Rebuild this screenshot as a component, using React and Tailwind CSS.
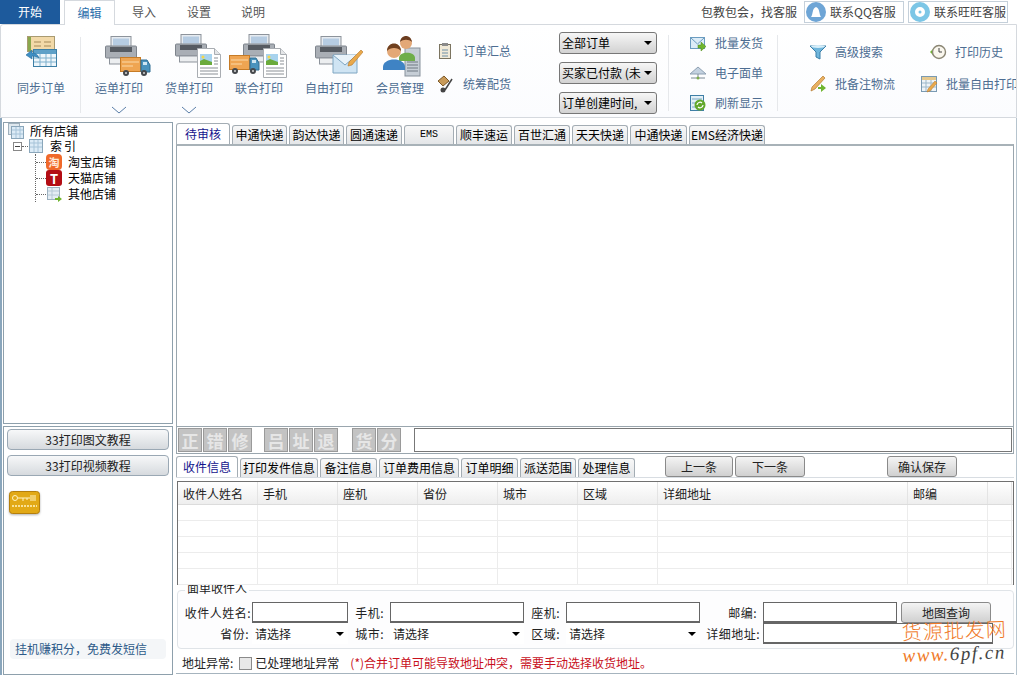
import React from 'react';

const FONT = 'font-["Noto_Sans_CJK_SC","Liberation_Sans",sans-serif]';
const COMMA = '\uFF0C';

const Printer = ({ x = 0, y = 0 }) => (
  <g transform={`translate(${x} ${y})`}>
    <rect x="6" y="0.5" width="20" height="10" fill="#e6ebf0" stroke="#8d939b" />
    <rect x="8" y="2.5" width="16" height="7" fill="#b6cce2" />
    <rect x="0.5" y="10" width="31" height="12" rx="1" fill="#a9aeb5" stroke="#7e848c" />
    <rect x="5" y="11" width="22" height="5" fill="#565b62" />
    <rect x="4.5" y="22" width="23" height="6" fill="#eceef0" stroke="#8d939b" />
  </g>
);

const Truck = ({ x = 0, y = 0 }) => (
  <g transform={`translate(${x} ${y})`}>
    <rect x="0.5" y="0.5" width="20" height="14" fill="#efa552" stroke="#c67b26" />
    <path d="M2 5h17M2 9h11" stroke="#fbd9a8" strokeWidth="1" />
    <path d="M21 3h6l3 5v7h-9z" fill="#4a93bd" stroke="#2e6d92" />
    <rect x="23" y="5" width="4" height="3" fill="#cfe6f2" />
    <circle cx="6" cy="16" r="3" fill="#45484c" />
    <circle cx="6" cy="16" r="1" fill="#d6d6d6" />
    <circle cx="24" cy="16" r="3" fill="#45484c" />
    <circle cx="24" cy="16" r="1" fill="#d6d6d6" />
  </g>
);

const Doc = ({ x = 0, y = 0 }) => (
  <g transform={`translate(${x} ${y})`}>
    <path d="M.5.5h17l6 6v23H.5z" fill="#fff" stroke="#a9adb2" />
    <path d="M17.5.5v6h6" fill="#e4e6e8" stroke="#a9adb2" />
    <rect x="3" y="6" width="12" height="11" fill="#a8d3ee" />
    <path d="M3 17v-4l4-2 8 3v3z" fill="#6bab3c" />
    <circle cx="6" cy="9" r="1.5" fill="#f6d64a" />
    <path d="M17 10h4M17 13h4M17 16h4M3 20h18M3 23h18M3 26h18" stroke="#8a8f95" />
  </g>
);

const Ico = ({ w = 18, h = 18, children }) => (
  <svg width={w} height={h} viewBox={`0 0 ${w} ${h}`} className="shrink-0">
    {children}
  </svg>
);

const SyncIcon = () => (
  <Ico w={32} h={32}>
    <rect x="2.5" y="0.5" width="27" height="15" fill="#f2d9a8" stroke="#a99a70" />
    <path d="M3 1h3v14H3z" fill="#8aa84c" />
    <path d="M9 6h7M19 6h7M9 10h7M19 10h7" stroke="#a58a58" />
    <rect x="8.5" y="13.5" width="23" height="17" fill="#eef6fb" stroke="#3d7fa6" />
    <rect x="9" y="14" width="22" height="4" fill="#5ea0c8" />
    <path d="M9 22h22M9 26h22M15 18v12M21 18v12M26 18v12" stroke="#7eb0cd" />
    <path d="M1 19l6-5v3c4 0 6 2 7 5-2-1-4-2-7-2v3z" fill="#3f8fc4" stroke="#2a6d9c" strokeWidth=".6" />
  </Ico>
);

const FreePrintIcon = () => (
  <Ico w={48} h={42}>
    <Printer x={0} y={0} />
    <path d="M18 19h24v18H18z" fill="#cfe4f3" stroke="#7ea6c2" />
    <path d="M18 19l12 10 12-10" fill="#e9f3fa" stroke="#7ea6c2" />
    <path d="M46 14l2 2-11 13-4 1 1-4z" fill="#e9a94b" stroke="#b5762a" strokeWidth=".6" />
  </Ico>
);

const MemberIcon = () => (
  <Ico w={40} h={42}>
    <rect x="22" y="12" width="15" height="28" fill="#c6ced6" stroke="#87919b" />
    <path d="M24 26h11M24 29h11M24 32h11M24 35h11" stroke="#6e7882" />
    <circle cx="23" cy="7" r="6" fill="#e3a877" />
    <path d="M17 6c1-8 11-8 12 0-3-3-9-3-12 0z" fill="#6b3d20" />
    <path d="M16 22c0-7 16-7 16 0v3H16z" fill="#6fae4a" />
    <circle cx="11" cy="15" r="7" fill="#e3a877" />
    <path d="M4 15c0-10 14-10 14 0-3-4-11-4-14 0z" fill="#70401f" />
    <path d="M0 31c0-10 22-10 22 0v3H0z" fill="#3f83c4" />
  </Ico>
);

const SummaryIcon = () => (
  <Ico>
    <rect x="3.5" y="2.5" width="11" height="14" fill="#f1ead8" stroke="#7b7460" />
    <rect x="6" y="1" width="6" height="3" fill="#8b8b8b" />
    <path d="M6 8h6M6 11h6M6 14h6" stroke="#6f8fa6" />
  </Ico>
);

const CartIcon = () => (
  <Ico>
    <path d="M2 6l6-5 5 5-6 5z" fill="#c89a58" stroke="#7d5a2a" />
    <path d="M16 4L9 15" stroke="#444" strokeWidth="1.5" />
    <circle cx="7" cy="15" r="2.5" fill="#444" />
  </Ico>
);

const MailIcon = () => (
  <Ico>
    <rect x="1.5" y="3.5" width="14" height="11" fill="#dcecf7" stroke="#6b9cc0" />
    <path d="M2 4l6.5 6L15 4" fill="none" stroke="#6b9cc0" />
    <path d="M9 11h3V8l5 4.5-5 4.5v-3H9z" fill="#6fb52f" stroke="#4c8a1a" strokeWidth=".5" />
  </Ico>
);

const CloudIcon = () => (
  <Ico>
    <path d="M1 10l8-7 8 7z" fill="#c4d2e0" stroke="#8ea0b2" />
    <path d="M9 10v4M2 14h14" stroke="#7d8a96" />
    <circle cx="9" cy="14" r="1.5" fill="#7fae4c" />
  </Ico>
);

const RefreshIcon = () => (
  <Ico>
    <rect x="1.5" y="1.5" width="13" height="15" fill="#e3f0f7" stroke="#3f7fa6" />
    <path d="M3 5h10M3 9h10M3 13h10" stroke="#7aa8c4" />
    <circle cx="11" cy="11" r="5.5" fill="#63a92c" />
    <path d="M8 11a3 3 0 015-2M14 11a3 3 0 01-5 2" fill="none" stroke="#fff" strokeWidth="1.2" />
  </Ico>
);

const FunnelIcon = () => (
  <Ico>
    <path d="M1 3h16l-6 6v7l-4-2V9z" fill="#6fb6dc" stroke="#3a7ea8" />
    <ellipse cx="9" cy="3.5" rx="7" ry="1.5" fill="#d6eef9" />
  </Ico>
);

const PencilArrowIcon = () => (
  <Ico>
    <path d="M14 1l2 2-10 11-4 2 1-4z" fill="#e9b060" stroke="#b57d34" strokeWidth=".7" />
    <path d="M9 12h3V9l5 4-5 4v-3H9z" fill="#6fb52f" />
  </Ico>
);

const ClockIcon = () => (
  <Ico>
    <path d="M1 9l3-3v6z" fill="#6fb52f" />
    <circle cx="10" cy="9" r="6.5" fill="#faf7ee" stroke="#8b8674" strokeWidth="1.4" />
    <path d="M10 5v4h3" fill="none" stroke="#444" />
  </Ico>
);

const GridPenIcon = () => (
  <Ico>
    <rect x="1.5" y="1.5" width="15" height="15" fill="#eef4f8" stroke="#7a9ab2" />
    <rect x="2" y="2" width="14" height="3" fill="#e6c98e" />
    <path d="M2 8h14M2 12h14M6 5v11M11 5v11" stroke="#9db8ca" />
    <path d="M15 6l2 2-7 8-3 1 1-3z" fill="#e9a94b" stroke="#b5762a" strokeWidth=".5" />
  </Ico>
);

const BellBadge = ({ color }) => (
  <svg width="22" height="22" viewBox="0 0 22 22" className="shrink-0">
    <circle cx="11" cy="11" r="10" fill={color} />
    <path d="M6 16c2-2 1-9 5-10 4 1 3 8 5 10z" fill="#fff" />
  </svg>
);

const RingBadge = ({ color }) => (
  <svg width="22" height="22" viewBox="0 0 22 22" className="shrink-0">
    <circle cx="11" cy="11" r="7.5" fill="#fff" stroke={color} strokeWidth="5" />
    <circle cx="11" cy="11" r="1.5" fill={color} />
  </svg>
);

const TableIcon = ({ stack }) => (
  <svg width="16" height="16" viewBox="0 0 16 16" className="shrink-0">
    {stack && <rect x="0.5" y="0.5" width="11" height="11" fill="#dfe8ee" stroke="#9fb0bc" />}
    <rect x={stack ? 3.5 : 1.5} y={stack ? 3.5 : 1.5} width={stack ? 12 : 13} height={stack ? 12 : 13} fill="#dcebf6" stroke="#8aa6ba" />
    <path d={stack ? 'M4 7h11M4 11h11M8 4v11M12 4v11' : 'M2 5h12M2 9h12M6 2v12M10 2v12'} stroke="#a6c3d8" />
  </svg>
);

const TaobaoIcon = () => (
  <span className="flex h-4 w-4 shrink-0 items-center justify-center rounded-[4px] bg-[#f0692a] text-[11px] leading-none font-bold text-[#ffe9d8]">淘</span>
);

const TmallIcon = () => (
  <span className="flex h-4 w-4 shrink-0 items-center justify-center rounded-[3px] bg-[#b30d14] text-[13px] leading-none font-bold text-white">T</span>
);

const OtherIcon = () => (
  <svg width="16" height="16" viewBox="0 0 16 16" className="shrink-0">
    <rect x="1.5" y="1.5" width="12" height="12" fill="#e4edf4" stroke="#9db1c0" />
    <path d="M2 5h11M2 9h11M6 2v11" stroke="#b5c8d6" />
    <path d="M9 12h3v-2l4 3-4 3v-2H9z" fill="#6fb52f" />
  </svg>
);

const KeyCard = () => (
  <svg width="31" height="23" viewBox="0 0 31 23">
    <rect x="0.5" y="0.5" width="30" height="22" rx="3" fill="#e2a916" stroke="#b57f0c" />
    <circle cx="6" cy="7" r="2.5" fill="none" stroke="#fff3c4" />
    <path d="M9 7h18M14 7v3M18 7v2M21 5h6M21 9h6" stroke="#fff3c4" />
    <path d="M3 15h25" stroke="#fff3c4" strokeDasharray="2 1" strokeWidth="1.5" />
  </svg>
);

const Caret = () => (
  <span className="h-0 w-0 shrink-0 border-x-[4px] border-t-[4px] border-x-transparent border-t-black" />
);

const LargeButton = ({ icon, label, chevron, width = 'w-[70px]' }) => (
  <div className={`relative flex h-full ${width} shrink-0 flex-col items-center`}>
    <div className="flex h-[46px] items-end">{icon}</div>
    <span className="mt-[2px] text-[12px] leading-[16px] whitespace-nowrap text-[#4d6d92]">{label}</span>
    {chevron && (
      <svg width="16" height="9" viewBox="0 0 16 9" className="mt-[10px]">
        <path d="M1 1l7 6 7-6" fill="none" stroke="#5a7ea8" strokeWidth="1" />
      </svg>
    )}
  </div>
);

const SmallButton = ({ icon, label, gap = 'gap-[8px]' }) => (
  <div className={`flex items-center ${gap} text-[12px] leading-[16px] whitespace-nowrap text-[#4d6d92]`}>
    {icon}
    <span>{label}</span>
  </div>
);

const RibbonSelect = ({ label }) => (
  <div className="flex h-[22px] w-[98px] items-center gap-[2px] rounded-[3px] border border-[#777] bg-gradient-to-b from-[#f6f6f6] to-[#d2d2d2] pr-[4px] pl-[2px]">
    <span className="flex-1 text-[12px] leading-[18px] whitespace-nowrap text-black">{label}</span>
    <Caret />
  </div>
);

const Divider = () => <div className="h-[76px] w-px shrink-0 self-center bg-[#e6e8eb]" />;

const Tab = ({ label, width, active, mono }) => (
  <div
    className={`flex shrink-0 items-center justify-center rounded-t-[3px] border border-b-0 border-[#a4adb4] leading-none whitespace-nowrap ${width} ${
      active ? 'bg-white text-[#14148c]' : 'mt-[2px] bg-gradient-to-b from-[#f8f8f8] to-[#e4e6e8] text-black'
    } ${mono ? 'font-["Liberation_Mono"] text-[10px]' : 'text-[12px]'}`}
  >
    {label}
  </div>
);

const GrayKey = ({ label }) => (
  <span className="flex h-[24px] w-[24px] shrink-0 items-center justify-center border border-[#9a9a9a] bg-[#c3c3c3] text-[17px] leading-none font-bold text-[#e6e6e6]">
    {label}
  </span>
);

const SideButton = ({ label }) => (
  <div className="flex h-[21px] items-center justify-center rounded-[4px] border border-[#9aa8b4] bg-gradient-to-b from-[#f7f8f9] to-[#d6dade] text-[12px] text-[#222]">
    {label}
  </div>
);

const ActionButton = ({ label, width }) => (
  <div className={`flex h-[21px] ${width} shrink-0 items-center justify-center rounded-[3px] border border-[#8a8a8a] bg-gradient-to-b from-[#f4f4f4] to-[#d0d0d0] text-[12px] text-[#222]`}>
    {label}
  </div>
);

const TreeChild = ({ icon, label }) => (
  <div className="flex h-4 items-center">
    <span className="h-0 w-[10px] shrink-0 border-t border-dotted border-[#666]" />
    {icon}
    <span className="ml-[6px]">{label}</span>
  </div>
);

const Field = ({ className = '' }) => (
  <div className={`h-[21px] border border-[#666] border-b-2 bg-white ${className}`} />
);

const FormLabel = ({ children, className = '' }) => (
  <span className={`text-right text-[12px] leading-[21px] tracking-[0.5px] whitespace-nowrap text-[#222] ${className}`}>{children}</span>
);

const FormSelect = () => (
  <div className="flex h-[21px] items-center justify-between bg-white pr-[4px] pl-[3px] text-[12px] text-[#222]">
    <span>请选择</span>
    <Caret />
  </div>
);

const COLUMNS = ['收件人姓名', '手机', '座机', '省份', '城市', '区域', '详细地址', '邮编', ''];
const TABLE_GRID = 'grid grid-cols-[80px_80px_80px_80px_80px_80px_250px_80px_24px]';

const App = () => (
  <div className={`relative flex h-[675px] w-[1017px] flex-col overflow-hidden bg-white text-[12px] text-black ${FONT}`}>
    {/* top tabs */}
    <div className="flex h-[24px] shrink-0 items-start">
      <div className="flex h-[24px] w-[60px] items-center justify-center bg-[#1d5a9c] text-white">开始</div>
      <div className="relative z-10 ml-[4px] flex h-[25px] w-[51px] items-center justify-center border border-b-0 border-[#d5d9de] bg-white text-[#2a6eaa]">编辑</div>
      <div className="ml-[2px] flex h-[24px] w-[54px] items-center justify-center text-[#555]">导入</div>
      <div className="flex h-[24px] w-[56px] items-center justify-center text-[#555]">设置</div>
      <div className="flex h-[24px] w-[52px] items-center justify-center text-[#555]">说明</div>
      <div className="ml-auto flex items-center pt-px pr-[9px]">
        <span className="mr-[7px] text-[#444]">{`包教包会${COMMA}找客服`}</span>
        <div className="flex h-[22px] w-[100px] items-center gap-[3px] border border-[#c5d0da] text-[#444]">
          <BellBadge color="#6ea5d6" />
          联系QQ客服
        </div>
        <div className="ml-[4px] flex h-[22px] w-[100px] items-center gap-[3px] border border-[#c5d0da] text-[#444]">
          <RingBadge color="#7cc6e6" />
          联系旺旺客服
        </div>
      </div>
    </div>

    {/* ribbon */}
    <div className="flex h-[94px] shrink-0 items-start overflow-hidden rounded-tl-[3px] border border-[#d5d9de] bg-gradient-to-b from-white to-[#fbfcfe] pt-[7px] pl-[5px]">
      <LargeButton label="同步订单" icon={<div className="mr-[1px] mb-[10px]"><SyncIcon /></div>} />
      <div className="mx-[4px] mt-[5px]"><Divider /></div>
      <div className="-ml-[1px] flex h-[84px] items-start">
        <LargeButton
          label="运单打印"
          chevron
          icon={
            <div className="ml-[19px]">
              <Ico w={48} h={42}>
                <Printer x={0} y={0} />
                <Truck x={15} y={21} />
              </Ico>
            </div>
          }
        />
        <LargeButton
          label="货单打印"
          chevron
          icon={
            <div className="ml-[19px]">
              <Ico w={48} h={44}>
                <Printer x={0} y={0} />
                <Doc x={22} y={14} />
              </Ico>
            </div>
          }
        />
        <LargeButton
          label="联合打印"
          icon={
            <Ico w={60} h={44}>
              <Printer x={14} y={0} />
              <Truck x={0} y={21} />
              <Doc x={34} y={14} />
            </Ico>
          }
        />
        <LargeButton label="自由打印" icon={<div className="ml-[19px]"><FreePrintIcon /></div>} />
        <LargeButton label="会员管理" width="w-[72px]" icon={<div className="ml-[5px]"><MemberIcon /></div>} />
      </div>
      <div className="flex flex-col gap-[15px] pt-[10px]">
        <SmallButton icon={<SummaryIcon />} label="订单汇总" gap="gap-[9px]" />
        <SmallButton icon={<CartIcon />} label="统筹配货" gap="gap-[9px]" />
      </div>
      <div className="mr-[9px] ml-[48px] flex flex-col gap-[8px]">
        <RibbonSelect label="全部订单" />
        <RibbonSelect label="买家已付款 (未" />
        <RibbonSelect label="订单创建时间," />
      </div>
      <div className="mt-[3px] mr-[20px] ml-[2px]"><Divider /></div>
      <div className="flex flex-col gap-[12px] pt-[2px]">
        <SmallButton icon={<MailIcon />} label="批量发货" />
        <SmallButton icon={<CloudIcon />} label="电子面单" />
        <SmallButton icon={<RefreshIcon />} label="刷新显示" />
      </div>
      <div className="mt-[3px] mr-[31px] ml-[14px]"><Divider /></div>
      <div className="flex flex-col gap-[14px] pt-[11px]">
        <SmallButton icon={<FunnelIcon />} label="高级搜索" />
        <SmallButton icon={<PencilArrowIcon />} label="批备注物流" />
      </div>
      <div className="ml-[25px] flex flex-col items-start gap-[14px] pt-[11px]">
        <div className="ml-[9px]"><SmallButton icon={<ClockIcon />} label="打印历史" /></div>
        <SmallButton icon={<GridPenIcon />} label="批量自由打印" />
      </div>
    </div>

    {/* body */}
    <div className="flex min-h-0 flex-1 border-r border-l-2 border-r-[#b6c4ce] border-l-[#8aa6bc] pt-[4px]">
      {/* left column */}
      <div className="ml-[1px] flex w-[170px] shrink-0 flex-col gap-[2px]">
        <div className="h-[302px] shrink-0 border border-[#8ea0ac] pl-[4px] text-[12px] leading-4">
          <div className="flex h-[15px] items-center">
            <TableIcon stack />
            <span className="ml-[6px]">所有店铺</span>
          </div>
          <div className="flex h-[16px] items-center pl-[5px]">
            <span className="flex h-[9px] w-[9px] shrink-0 items-center justify-center border border-[#888] bg-white">
              <span className="h-px w-[5px] bg-[#444]" />
            </span>
            <span className="h-0 w-[6px] border-t border-dotted border-[#666]" />
            <TableIcon />
            <span className="ml-[6px] tracking-[2px]">索引</span>
          </div>
          <div className="ml-[27px] border-l border-dotted border-[#666]">
            <TreeChild icon={<TaobaoIcon />} label="淘宝店铺" />
            <TreeChild icon={<TmallIcon />} label="天猫店铺" />
            <TreeChild icon={<OtherIcon />} label="其他店铺" />
          </div>
        </div>
        <div className="flex min-h-0 flex-1 flex-col border border-[#8ea0ac] px-[3px] pt-[2px] pb-[15px]">
          <div className="flex flex-col gap-[5px]">
            <SideButton label="33打印图文教程" />
            <SideButton label="33打印视频教程" />
          </div>
          <div className="mt-[15px] ml-[2px] w-[31px] drop-shadow-[0_1px_1px_rgba(0,0,0,0.3)]"><KeyCard /></div>
          <div className="mt-auto ml-[3px] flex h-[20px] w-[156px] items-center rounded-[4px] bg-[#f4f6f8] pl-[5px] text-[#2d5a88]">
            {`挂机赚积分${COMMA}免费发短信`}
          </div>
        </div>
      </div>

      {/* right column */}
      <div className="ml-[3px] flex min-w-0 flex-1 flex-col pr-[2px]">
        <div className="mt-[1px] flex h-[21px] shrink-0 items-stretch gap-[2px]">
          <Tab label="待审核" width="w-[54px]" active />
          <Tab label="申通快递" width="w-[55px]" />
          <Tab label="韵达快递" width="w-[55px]" />
          <Tab label="圆通速递" width="w-[56px]" />
          <Tab label="EMS" width="w-[50px]" mono />
          <Tab label="顺丰速运" width="w-[56px]" />
          <Tab label="百世汇通" width="w-[56px]" />
          <Tab label="天天快递" width="w-[56px]" />
          <Tab label="中通快递" width="w-[57px]" />
          <Tab label="EMS经济快递" width="w-[76px]" />
        </div>
        <div className="h-[283px] shrink-0 border-x border-t-2 border-b border-[#9aa6ae] border-t-[#a8b2b8] bg-white" />
        <div className="flex h-[27px] shrink-0 items-center border-x border-b border-[#9aa6ae] pl-px">
          <div className="flex gap-px"><GrayKey label="正" /><GrayKey label="错" /><GrayKey label="修" /></div>
          <div className="ml-[12px] flex gap-px"><GrayKey label="吕" /><GrayKey label="址" /><GrayKey label="退" /></div>
          <div className="ml-[14px] flex gap-px"><GrayKey label="货" /><GrayKey label="分" /></div>
          <div className="mr-px ml-[13px] h-[24px] flex-1 border border-[#777] bg-white" />
        </div>
        <div className="mt-[2px] flex h-[22px] shrink-0 items-stretch gap-[2px] border-b border-[#d8dde2]">
          <Tab label="收件信息" width="w-[62px]" active />
          <Tab label="打印发件信息" width="w-[78px]" />
          <Tab label="备注信息" width="w-[57px]" />
          <Tab label="订单费用信息" width="w-[80px]" />
          <Tab label="订单明细" width="w-[57px]" />
          <Tab label="派送范围" width="w-[56px]" />
          <Tab label="处理信息" width="w-[57px]" />
          <div className="ml-[28px]"><ActionButton label="上一条" width="w-[68px]" /></div>
          <ActionButton label="下一条" width="w-[70px]" />
          <div className="ml-[80px]"><ActionButton label="确认保存" width="w-[70px]" /></div>
        </div>
        <div className="relative z-10 mt-[3px] ml-px h-[104px] shrink-0 border border-[#707070] bg-white">
          <div className={`${TABLE_GRID} h-[23px] border-b border-[#dcdcdc] bg-gradient-to-b from-white to-[#eeeeee]`}>
            {COLUMNS.map((col, i) => (
              <div key={i} className="flex items-center border-r border-[#e4e4e4] pt-[2px] pl-[5px] text-[#222]">{col}</div>
            ))}
          </div>
          {[0, 1, 2, 3, 4].map((row) => (
            <div key={row} className={`${TABLE_GRID} h-4 border-b border-[#ececec]`}>
              {COLUMNS.map((_, i) => (
                <div key={i} className="border-r border-[#ececec]" />
              ))}
            </div>
          ))}
        </div>
        <fieldset className="-mt-[1px] ml-px h-[65px] shrink-0 rounded-[4px] border border-[#e0e4e8] bg-[#fdfdfe] pl-0">
          <legend className="ml-[7px] h-[12px] px-[2px] text-[12px] leading-[8px] text-[#222]">面单收件人</legend>
          <div className="grid grid-cols-[74px_96px_42px_134px_42px_134px_63px_134px_4px_90px] grid-rows-[21px_21px] pt-[6px]">
            <FormLabel className="pr-[1px]">收件人姓名:</FormLabel>
            <Field />
            <FormLabel className="pr-[6px]">手机:</FormLabel>
            <Field />
            <FormLabel className="pr-[6px]">座机:</FormLabel>
            <Field />
            <FormLabel className="pr-[6px]">邮编:</FormLabel>
            <Field />
            <span />
            <ActionButton label="地图查询" width="w-[90px]" />
            <FormLabel className="pr-[3px]">省份:</FormLabel>
            <FormSelect />
            <FormLabel className="pr-[6px]">城市:</FormLabel>
            <FormSelect />
            <FormLabel className="pr-[6px]">区域:</FormLabel>
            <FormSelect />
            <FormLabel className="pr-[3px]">详细地址:</FormLabel>
            <Field className="col-span-3 w-[230px]" />
          </div>
        </fieldset>
        <div className="flex h-[25px] shrink-0 items-center border-b border-[#a6b4be] pt-[4px] pl-[6px]">
          <span className="text-[#222]">地址异常:</span>
          <span className="ml-[6px] h-[13px] w-[13px] border border-[#8a8a8a] bg-[#e8e8e8]" />
          <span className="ml-[3px] text-[#222]">已处理地址异常</span>
          <span className="ml-[11px] text-[#c8101c]">{`(*)合并订单可能导致地址冲突${COMMA}需要手动选择收货地址。`}</span>
        </div>
      </div>
    </div>

    {/* watermark over the form */}
    <div className="pointer-events-none absolute top-[617px] left-[902px] z-20 flex w-[112px] -rotate-2 flex-col">
      <span className="text-[20px] leading-[26px] font-light tracking-[1px] whitespace-nowrap text-[#f07a28]">货源批发网</span>
      <span className="mt-[1px] font-['Liberation_Serif'] text-[19px] leading-[20px] tracking-[1.5px] whitespace-nowrap text-[#f07a28] italic">
        www.<span className="text-[#444]">6pf.cn</span>
      </span>
    </div>
  </div>
);

export default App;
